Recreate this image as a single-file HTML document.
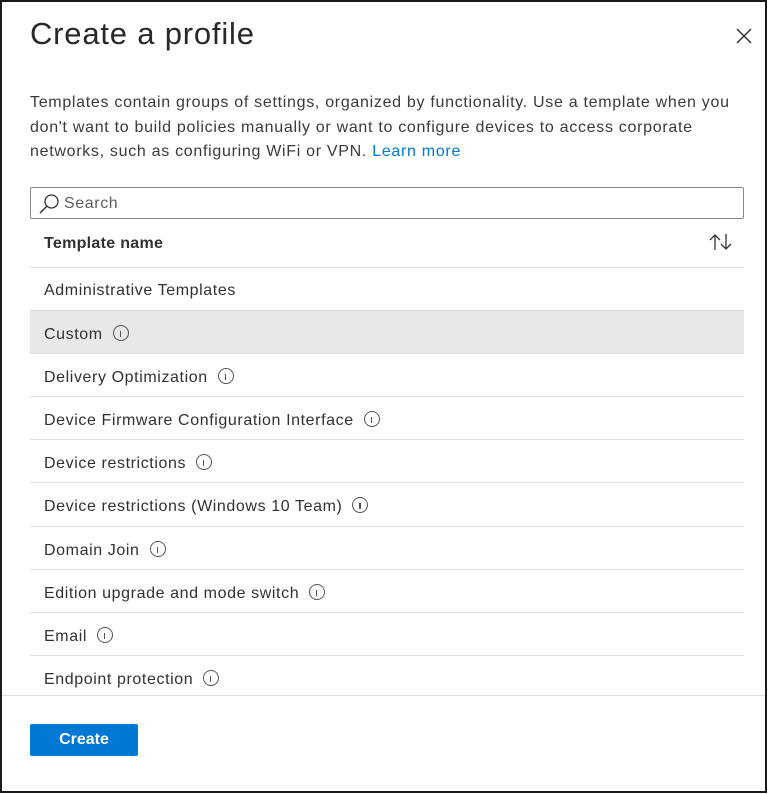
<!DOCTYPE html>
<html><head><meta charset="utf-8"><style>
*{box-sizing:border-box;margin:0;padding:0}
body{width:768px;height:794px;background:#fff;font-family:"Liberation Sans",sans-serif;color:#323130;position:relative;overflow:hidden}
.frame{position:absolute;left:0;top:0;width:767px;height:793px;border:2px solid #1a1a1a}
h1{position:absolute;left:30px;top:16px;font-size:31px;font-weight:normal;color:#292827;letter-spacing:0.8px}
.close{position:absolute;left:735px;top:27px}
.desc{position:absolute;left:30px;top:91px;width:740px;font-size:16px;line-height:24.5px;color:#3b3a39;white-space:nowrap;letter-spacing:0.7px}
.desc a{color:#0078d4;text-decoration:none}
.search{position:absolute;left:30px;top:187px;width:714px;height:32px;border:1px solid #8a8886;border-radius:2px}
.search span{position:absolute;left:33px;top:7px;font-size:16px;color:#605e5c;letter-spacing:0.6px}
.search svg{position:absolute;left:7px;top:5px}
.hdr{position:absolute;left:44px;top:235px;font-size:16px;font-weight:bold;color:#323130;letter-spacing:0.3px}
.sort{position:absolute;left:708px;top:232px}
.row{position:absolute;left:30px;width:714px;height:43px;border-top:1px solid #e1dfdd;font-size:16px;padding:14px 0 0 14px;color:#323130;letter-spacing:0.6px}
.row.sel{background:#e8e8e8;border-top-color:#d6d6d6}
.i{display:inline-block;width:16px;height:16px;border:1.2px solid #555;border-radius:50%;vertical-align:-2px;margin-left:10px;position:relative}
.i:after{content:"";position:absolute;left:6px;top:5px;width:1.2px;height:6px;background:#555}
.bottom{position:absolute;left:2px;top:695px;width:763px;border-top:1px solid #e1dfdd}
.btn{position:absolute;left:30px;top:724px;width:108px;height:32px;background:#0078d4;color:#fff;font-size:16px;font-weight:bold;border-radius:2px;text-align:center;line-height:32px}
</style></head><body>
<div class="frame"></div>
<h1>Create a profile</h1>
<svg class="close" width="18" height="18" viewBox="0 0 18 18"><path d="M2 2L16 16M16 2L2 16" stroke="#323130" stroke-width="1.5"/></svg>
<div class="desc">Templates contain groups of settings, organized by functionality. Use a template when you<br>don't want to build policies manually or want to configure devices to access corporate<br>networks, such as configuring WiFi or VPN. <a>Learn more</a></div>
<div class="search"><svg width="22" height="22" viewBox="0 0 22 22"><circle cx="13.5" cy="8.5" r="6.5" fill="none" stroke="#323130" stroke-width="1.3"/><path d="M8.8 13.2L2 20" stroke="#323130" stroke-width="1.4"/></svg><span>Search</span></div>
<div class="hdr">Template name</div>
<svg class="sort" width="26" height="20" viewBox="0 0 26 20"><path d="M7 18V3M2 8L7 3L12 8M18 2V17M13 12L18 17L23 12" fill="none" stroke="#323130" stroke-width="1.3"/></svg>
<div class="row" style="top:267px">Administrative Templates</div>
<div class="row sel" style="top:310px">Custom<span class="i"></span></div>
<div class="row" style="top:353px">Delivery Optimization<span class="i"></span></div>
<div class="row" style="top:396px">Device Firmware Configuration Interface<span class="i"></span></div>
<div class="row" style="top:439px">Device restrictions<span class="i"></span></div>
<div class="row" style="top:482px">Device restrictions (Windows 10 Team)<span class="i"></span></div>
<div class="row" style="top:526px">Domain Join<span class="i"></span></div>
<div class="row" style="top:569px">Edition upgrade and mode switch<span class="i"></span></div>
<div class="row" style="top:612px">Email<span class="i"></span></div>
<div class="row" style="top:655px">Endpoint protection<span class="i"></span></div>
<div class="bottom"></div>
<div class="btn">Create</div>
</body></html>
